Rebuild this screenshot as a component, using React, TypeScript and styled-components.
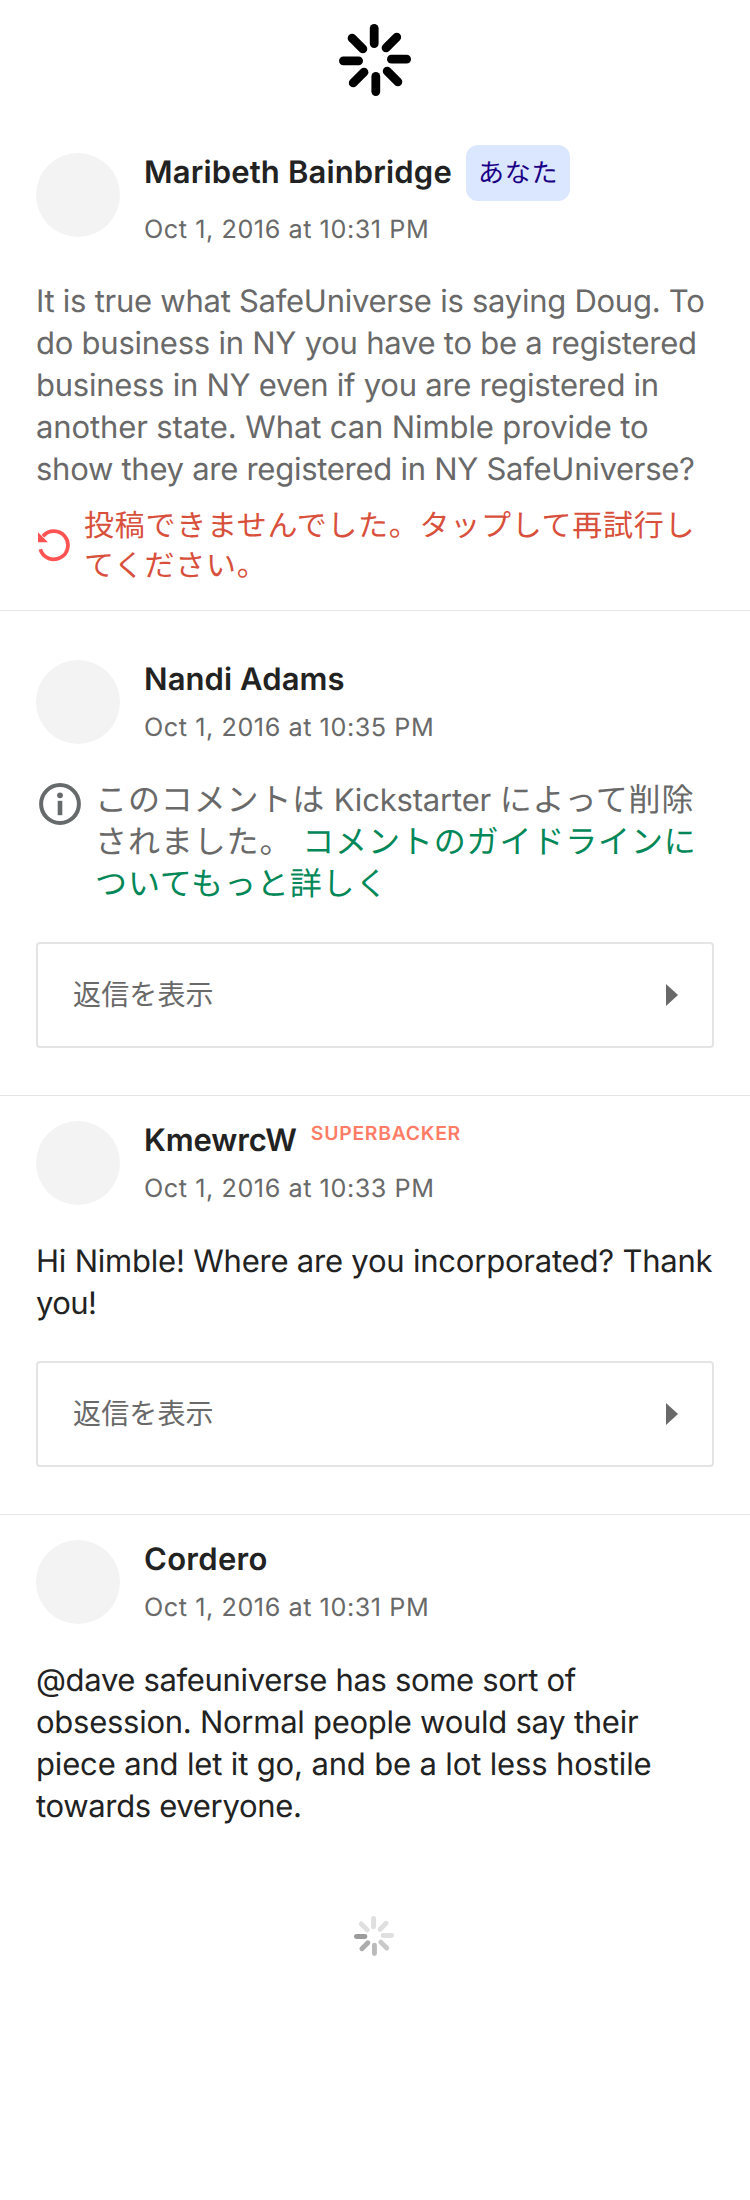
import React from "react";
import styled, { createGlobalStyle } from "styled-components";

const GlobalStyle = createGlobalStyle`
  body {
    margin: 0;
    background: #fff;
    font-family: Inter, "Noto Sans CJK JP", sans-serif;
    text-rendering: geometricPrecision;
    -webkit-font-smoothing: antialiased;
  }
`;

const Screen = styled.main`
  width: 750px;
  min-height: 2200px;
  background: #fff;
`;

const LoadingHeader = styled.div`
  display: flex;
  justify-content: center;
  height: 121px;
  padding-top: 24px;
  box-sizing: border-box;
`;

const LoadingFooter = styled.div`
  display: flex;
  justify-content: center;
  padding: 88px 2px 0 0;
`;

const Comment = styled.article<{ $top: number; $bottom: number; $last?: boolean }>`
  padding: ${(p) => p.$top}px 36px ${(p) => p.$bottom}px;
  border-bottom: ${(p) => (p.$last ? "none" : "1px solid #e4e4e4")};
`;

const Header = styled.header`
  display: flex;
  align-items: flex-end;
  gap: 24px;
`;

const Avatar = styled.div`
  flex: none;
  width: 84px;
  height: 84px;
  border-radius: 50%;
  background: #f3f3f3;
`;

const Meta = styled.div<{ $tall?: boolean }>`
  display: flex;
  flex-direction: column;
  box-sizing: border-box;
  gap: 13px;
  height: ${(p) => (p.$tall ? 92 : 84)}px;
  padding-top: ${(p) => (p.$tall ? 0 : 1)}px;
`;

const NameRow = styled.div`
  display: flex;
  align-items: center;
  gap: 14px;
`;

const Name = styled.h2<{ $track: number }>`
  margin: 0;
  font-size: 31px;
  font-weight: 600;
  line-height: 38px;
  letter-spacing: ${(p) => p.$track}px;
  color: #222;
`;

const DateText = styled.time`
  font-size: 25.2px;
  line-height: 32px;
  letter-spacing: 0.56px;
  color: #696969;
`;

const YouBadge = styled.span`
  box-sizing: border-box;
  width: 104px;
  height: 56px;
  padding-left: 12px;
  border-radius: 12px;
  background: #dbe7ff;
  color: #1a0085;
  font-size: 26px;
  line-height: 57px;
  letter-spacing: 0.8px;
`;

const Superbacker = styled.span`
  align-self: flex-start;
  font-size: 19.4px;
  font-weight: 600;
  line-height: 23px;
  letter-spacing: 0.72px;
  color: #ff7c66;
`;

const Body = styled.p<{ $muted?: boolean; $top?: number }>`
  margin: ${(p) => p.$top ?? 36}px 0 0;
  font-size: 31px;
  line-height: 42px;
  color: ${(p) => (p.$muted ? "#696969" : "#222")};
`;

const Line = styled.span<{ $track: number }>`
  display: block;
  white-space: nowrap;
  letter-spacing: ${(p) => p.$track}px;
`;

const Retry = styled.div`
  display: flex;
  align-items: center;
  gap: 13px;
  margin-top: 15px;
  padding-left: 1px;
  svg {
    flex: none;
    margin-bottom: 2px;
  }
`;

const RetryText = styled.p`
  margin: 0;
  font-size: 30px;
  line-height: 40px;
  letter-spacing: 0.72px;
  white-space: nowrap;
  color: #d8503c;
`;

const Removed = styled.div`
  display: flex;
  align-items: flex-start;
  gap: 14px;
  margin-top: 35px;
  padding-left: 3px;
  svg {
    flex: none;
    margin-top: 4px;
  }
`;

const RemovedText = styled.p`
  margin: 0;
  font-size: 32px;
  line-height: 42px;
  letter-spacing: 0.88px;
  white-space: nowrap;
  color: #696969;
`;

const Latin = styled.span`
  font-size: 31px;
  line-height: 1;
  letter-spacing: -0.18px;
`;

const GuideLink = styled.a`
  color: #028858;
`;

const RepliesButton = styled.button<{ $top: number }>`
  display: flex;
  align-items: center;
  justify-content: space-between;
  box-sizing: border-box;
  width: 100%;
  height: 106px;
  margin-top: ${(p) => p.$top}px;
  padding: 0 34px 0 35px;
  border: 2px solid #e4e4e4;
  border-radius: 4px;
  background: #fff;
  color: #696969;
  font-family: inherit;
  font-size: 28px;
  line-height: 40px;
  letter-spacing: 0.15px;
`;

const SPOKES = [0, 1, 2, 3, 4, 5, 6, 7];

function Spinner({ size, colors }: { size: number; colors: string[] }) {
  return (
    <svg width={size} height={size} viewBox="-36 -36 72 72">
      {SPOKES.map((n) => (
        <line
          key={n}
          x1="-0.8"
          x2="-0.8"
          y1="-31.6"
          y2="-16.4"
          stroke={colors[n]}
          strokeWidth="8.8"
          strokeLinecap="round"
          transform={`rotate(${n * 45})`}
        />
      ))}
    </svg>
  );
}

function RetryIcon() {
  return (
    <svg width="34" height="34" viewBox="0 0 34 34" fill="none">
      <path d="M3.3 21.2 A14.1 14.1 0 1 0 6 8.2" stroke="#ff5252" strokeWidth="3.7" />
      <path d="M1 4.2 V14.3 H11 Z" fill="#ff5252" />
    </svg>
  );
}

function InfoIcon() {
  return (
    <svg width="42" height="42" viewBox="0 0 42 42" fill="none">
      <circle cx="21" cy="21" r="18.9" stroke="#666a6a" strokeWidth="4" />
      <circle cx="21" cy="12.3" r="2.9" fill="#666a6a" />
      <path d="M21 17.8 V32.2" stroke="#666a6a" strokeWidth="4.6" />
    </svg>
  );
}

function ViewReplies({ top }: { top: number }) {
  return (
    <RepliesButton $top={top}>
      返信を表示
      <svg width="12" height="22" viewBox="0 0 12 22">
        <path d="M0 0 L12 11 L0 22 Z" fill="#696969" />
      </svg>
    </RepliesButton>
  );
}

const BLACK = SPOKES.map(() => "#000");
const FADED = ["#dfdfdf", "#dfdfdf", "#dfdfdf", "#c9c9c9", "#bababa", "#acacac", "#9c9c9c", "#dfdfdf"];

export default function App() {
  return (
    <Screen>
      <GlobalStyle />
      <LoadingHeader>
        <Spinner size={72} colors={BLACK} />
      </LoadingHeader>

      <Comment $top={24} $bottom={24}>
        <Header>
          <Avatar />
          <Meta $tall>
            <NameRow>
              <Name $track={0.15}>Maribeth Bainbridge</Name>
              <YouBadge>あなた</YouBadge>
            </NameRow>
            <DateText>Oct 1, 2016 at 10:31 PM</DateText>
          </Meta>
        </Header>
        <Body $muted $top={44}>
          <Line $track={-0.26}>It is true what SafeUniverse is saying Doug. To</Line>
          <Line $track={-0.24}>do business in NY you have to be a registered</Line>
          <Line $track={-0.26}>business in NY even if you are registered in</Line>
          <Line $track={-0.11}>another state. What can Nimble provide to</Line>
          <Line $track={-0.27}>show they are registered in NY SafeUniverse?</Line>
        </Body>
        <Retry>
          <RetryIcon />
          <RetryText>
            投稿できませんでした。タップして再試行し
            <br />
            てください。
          </RetryText>
        </Retry>
      </Comment>

      <Comment $top={49} $bottom={47}>
        <Header>
          <Avatar />
          <Meta>
            <Name $track={0.09}>Nandi Adams</Name>
            <DateText>Oct 1, 2016 at 10:35 PM</DateText>
          </Meta>
        </Header>
        <Removed>
          <InfoIcon />
          <RemovedText>
            このコメントは<Latin> Kickstarter </Latin>によって削除
            <br />
            されました。 <GuideLink>コメントのガイドラインに
            <br />
            ついてもっと詳しく</GuideLink>
          </RemovedText>
        </Removed>
        <ViewReplies top={37} />
      </Comment>

      <Comment $top={25} $bottom={47}>
        <Header>
          <Avatar />
          <Meta>
            <NameRow>
              <Name $track={-0.07}>KmewrcW</Name>
              <Superbacker>SUPERBACKER</Superbacker>
            </NameRow>
            <DateText>Oct 1, 2016 at 10:33 PM</DateText>
          </Meta>
        </Header>
        <Body>
          <Line $track={-0.21}>Hi Nimble! Where are you incorporated? Thank</Line>
          <Line $track={-0.6}>you!</Line>
        </Body>
        <ViewReplies top={36} />
      </Comment>

      <Comment $top={25} $bottom={0} $last>
        <Header>
          <Avatar />
          <Meta>
            <Name $track={0.3}>Cordero</Name>
            <DateText>Oct 1, 2016 at 10:31 PM</DateText>
          </Meta>
        </Header>
        <Body>
          <Line $track={-0.33}>@dave safeuniverse has some sort of</Line>
          <Line $track={-0.26}>obsession. Normal people would say their</Line>
          <Line $track={-0.15}>piece and let it go, and be a lot less hostile</Line>
          <Line $track={-0.33}>towards everyone.</Line>
        </Body>
      </Comment>

      <LoadingFooter>
        <Spinner size={40} colors={FADED} />
      </LoadingFooter>
    </Screen>
  );
}
